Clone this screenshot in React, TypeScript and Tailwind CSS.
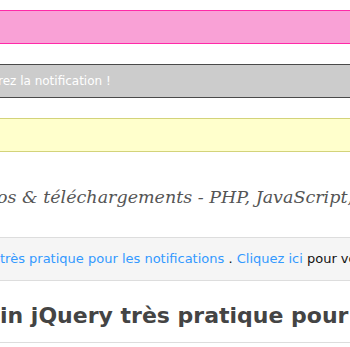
export default function App() {
  return (
    <div className="w-[350px] h-[347px] overflow-hidden bg-white pt-[10px]">
      <div className="h-[34px] border-y border-[#ff2aa8] bg-[#f9a1d6]" />
      <div className="mt-[20px] h-[34px] border-y border-[#4a4a4a] bg-[#cccccc] flex items-center overflow-hidden">
        <span
          className="whitespace-nowrap text-white text-[12px] ml-[-2px]"
          style={{ fontFamily: '"DejaVu Sans", sans-serif' }}
        >
          rez la notification !
        </span>
      </div>
      <div className="mt-[20px] h-[34px] border-y border-[#d3d37a] bg-[#ffffcc]" />
      <div className="mt-[30px] h-[30px] flex items-center overflow-hidden">
        <span
          className="whitespace-nowrap italic text-[#555555] text-[17.5px] ml-[-3px]"
          style={{ fontFamily: '"DejaVu Serif", serif' }}
        >
          os &amp; téléchargements - PHP, JavaScript, jQuery
        </span>
      </div>
      <div className="mt-[25px] h-[44px] border-y border-[#dddddd] bg-[#f5f5f5] flex items-center overflow-hidden">
        <span
          className="whitespace-nowrap text-[13px] text-[#111111]"
          style={{ fontFamily: '"DejaVu Sans", sans-serif' }}
        >
          <span className="text-[#3399ff]">très pratique pour les notifications</span> .{' '}
          <span className="text-[#3399ff]">Cliquez ici</span> pour voir
        </span>
      </div>
      <div className="h-[62px] pt-[8px] border-b border-[#dddddd] flex items-center overflow-hidden">
        <span
          className="whitespace-nowrap font-bold text-[#444444] text-[22px]"
          style={{ fontFamily: '"DejaVu Sans", sans-serif' }}
        >
          in jQuery très pratique pour les notifications
        </span>
      </div>
    </div>
  );
}
